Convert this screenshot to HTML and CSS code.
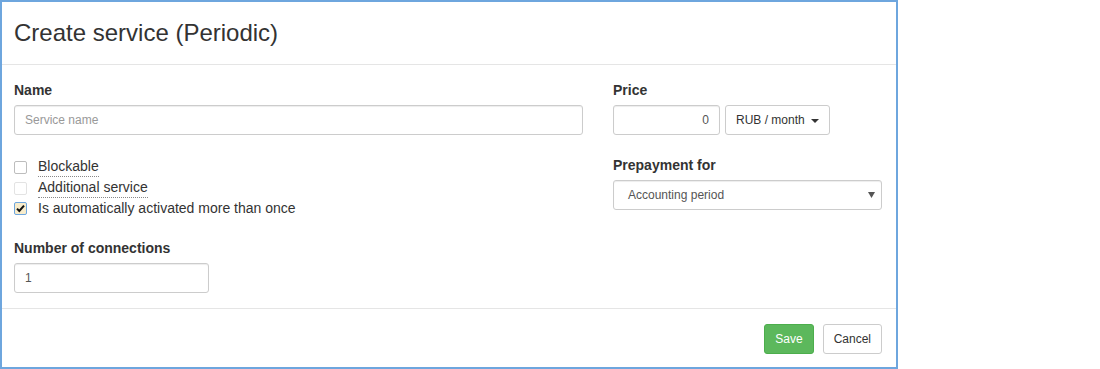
FILE: index.html
```html
<!DOCTYPE html>
<html lang="en">
<head>
  <meta charset="UTF-8">
  <title>Create service (Periodic)</title>
  <link rel="stylesheet" href="styles.css">
</head>
<body>
  <div class="modal">
    <div class="modal-header">
      <h3 class="modal-title">Create service (Periodic)</h3>
    </div>

    <div class="modal-body">
      <div class="row">
        <div class="col-main">
          <div class="form-group">
            <label class="control-label">Name</label>
            <input class="form-control" type="text" placeholder="Service name">
          </div>

          <div class="checks">
            <label class="check">
              <span class="box"></span>
              <span class="hint">Blockable</span>
            </label>
            <label class="check">
              <span class="box disabled"></span>
              <span class="hint">Additional service</span>
            </label>
            <label class="check">
              <span class="box checked">
                <svg width="11" height="11" viewBox="0 0 11 11"><path d="M2 5.6 L4.3 8 L9 2.6" fill="none" stroke="#111" stroke-width="2"/></svg>
              </span>
              <span>Is automatically activated more than once</span>
            </label>
          </div>

          <div class="form-group">
            <label class="control-label">Number of connections</label>
            <input class="form-control short" type="text" value="1">
          </div>
        </div>

        <div class="col-side">
          <div class="form-group">
            <label class="control-label">Price</label>
            <div class="price">
              <input class="form-control price-input" type="text" value="0">
              <button class="btn btn-default" type="button">RUB / month <span class="caret"></span></button>
            </div>
          </div>

          <div class="form-group">
            <label class="control-label">Prepayment for</label>
            <div class="form-control select">
              <span>Accounting period</span>
              <svg width="7" height="6" viewBox="0 0 7 6"><path d="M0 0 H7 L3.5 6 Z" fill="#555"/></svg>
            </div>
          </div>
        </div>
      </div>
    </div>

    <div class="modal-footer">
      <button class="btn btn-success" type="button">Save</button>
      <button class="btn btn-default" type="button">Cancel</button>
    </div>
  </div>
</body>
</html>
```

FILE: styles.css
```css
body {
  margin: 0;
  font-family: "Liberation Sans", Arial, sans-serif;
  font-size: 14px;
  line-height: 20px;
  color: #333;
  background: #fff;
}
.modal {
  width: 894px;
  height: 365px;
  border: 2px solid #6ea6de;
  display: flex;
  flex-direction: column;
}
.modal-header {
  height: 62px;
  padding: 0 14px 0 12px;
  display: flex;
  align-items: center;
  border-bottom: 1px solid #e5e5e5;
}
.modal-title {
  margin: 0;
  font-size: 24px;
  font-weight: normal;
  line-height: 28px;
}
.modal-body {
  padding: 15px 14px 15px 12px;
}
.row {
  display: grid;
  grid-template-columns: 569px 269px;
  column-gap: 30px;
}
.form-group {
  margin-bottom: 20px;
}
.form-group:last-child {
  margin-bottom: 0;
}
.control-label {
  display: block;
  font-weight: bold;
  margin-bottom: 5px;
}
.form-control {
  display: block;
  box-sizing: border-box;
  width: 100%;
  height: 30px;
  padding: 5px 10px;
  font-family: inherit;
  font-size: 12px;
  line-height: 18px;
  color: #555;
  background: #fff;
  border: 1px solid #ccc;
  border-radius: 3px;
  box-shadow: inset 0 1px 1px rgba(0, 0, 0, .075);
  outline: none;
}
.form-control::placeholder {
  color: #999;
}
.short {
  width: 195px;
}
.checks {
  padding-top: 1px;
  margin-bottom: 19px;
}
.check {
  display: flex;
  align-items: center;
  height: 21px;
  line-height: 21px;
}
.box {
  box-sizing: border-box;
  width: 13px;
  height: 13px;
  margin: 2px 11px 0 0;
  border: 1px solid #bdbdbd;
  border-radius: 2px;
  background: #fff;
  display: flex;
  align-items: center;
  justify-content: center;
}
.box.disabled {
  border-color: #e3e3e3;
}
.box.checked {
  border-color: #6ea6de;
  background: #f8eccb;
  margin-top: 0;
}
.hint {
  border-bottom: 1px dotted #888;
  line-height: 19px;
}
.price {
  display: flex;
  gap: 5px;
}
.price-input {
  width: 107px;
  text-align: right;
}
.btn {
  box-sizing: border-box;
  height: 30px;
  padding: 5px 10px;
  font-family: inherit;
  font-size: 12px;
  line-height: 18px;
  border: 1px solid transparent;
  border-radius: 3px;
  cursor: pointer;
}
.btn-default {
  color: #333;
  background: #fff;
  border-color: #ccc;
}
.btn-success {
  color: #fff;
  background: #5cb85c;
  border-color: #4cae4c;
}
.caret {
  display: inline-block;
  width: 0;
  height: 0;
  margin-left: 3px;
  vertical-align: middle;
  border-top: 4px solid #333;
  border-left: 4px solid transparent;
  border-right: 4px solid transparent;
}
.select {
  display: flex;
  align-items: center;
  justify-content: space-between;
  padding: 5px 6px 5px 14px;
}
.modal-footer {
  margin-top: auto;
  padding: 15px 14px 13px 12px;
  border-top: 1px solid #e5e5e5;
  display: flex;
  justify-content: flex-end;
  gap: 9px;
}
```
